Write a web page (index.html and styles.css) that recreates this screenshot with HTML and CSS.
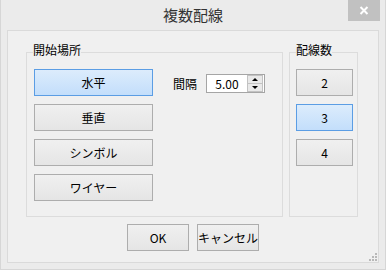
FILE: index.html
```html
<!DOCTYPE html>
<html lang="ja">
<head>
    <meta charset="UTF-8">
    <title>複数配線</title>
    <link rel="stylesheet" href="styles.css">
</head>
<body>

    <div class="window">
        <div class="titlebar">
            <span class="title">複数配線</span>
            <button class="close" type="button" aria-label="閉じる">
                <svg width="10" height="9" viewBox="0 0 10 9"><path d="M1.5 1 L8.5 8 M8.5 1 L1.5 8" stroke="#fff" stroke-width="2"/></svg>
            </button>
        </div>

        <div class="panel">
            <div class="groups">
                <fieldset class="group group-start">
                    <legend>開始場所</legend>
                    <div class="btn-col">
                        <button class="btn wide on" type="button">水平</button>
                        <button class="btn wide" type="button">垂直</button>
                        <button class="btn wide" type="button">シンボル</button>
                        <button class="btn wide" type="button">ワイヤー</button>
                    </div>
                    <div class="spacing">
                        <label for="pitch">間隔</label>
                        <div class="spinbox">
                            <input type="text" id="pitch" value="5.00">
                            <svg class="spin" width="16" height="17" viewBox="0 0 16 17">
                                <rect x="0.5" y="0.5" width="15" height="16" fill="#e9e9e9" stroke="#c2c2c2"/>
                                <path d="M1 8.5 H15" stroke="#c2c2c2"/>
                                <path d="M5 6 L8 3 L11 6 Z" fill="#000"/>
                                <path d="M5 11 L11 11 L8 14 Z" fill="#000"/>
                            </svg>
                        </div>
                    </div>
                </fieldset>

                <fieldset class="group group-count">
                    <legend>配線数</legend>
                    <div class="btn-col">
                        <button class="btn narrow" type="button">2</button>
                        <button class="btn narrow on" type="button">3</button>
                        <button class="btn narrow" type="button">4</button>
                    </div>
                </fieldset>
            </div>

            <div class="actions">
                <button class="btn action" type="button">OK</button>
                <button class="btn action" type="button">キャンセル</button>
            </div>

            <!-- resize grip -->
            <svg class="grip" width="8" height="8" viewBox="0 0 8 8" fill="#b8b8b8">
                <rect x="6" y="0" width="2" height="2"/>
                <rect x="3" y="3" width="2" height="2"/><rect x="6" y="3" width="2" height="2"/>
                <rect x="0" y="6" width="2" height="2"/><rect x="3" y="6" width="2" height="2"/><rect x="6" y="6" width="2" height="2"/>
            </svg>
        </div>
    </div>

</body>
</html>
```

FILE: styles.css
```css
body { margin: 0; background-color: #ebebeb; font-family: "Noto Sans CJK JP", "Liberation Sans", sans-serif; font-size: 12px; color: #000; }
.window { width: 386px; height: 270px; box-sizing: border-box; background-color: #ebebeb; border: 1px solid #d6d6d6; border-top: none; }
.titlebar { display: grid; grid-template-columns: 1fr auto 1fr; height: 30px; }
.title { grid-column: 2; font-size: 15px; line-height: 30px; color: #333; }
.close { grid-column: 3; justify-self: end; align-self: start; width: 32px; height: 21px; margin-right: 5px; padding: 0; border: none; background-color: #c1c1c1; display: flex; align-items: center; justify-content: center; }
.panel { position: relative; margin: 0 6px; height: 233px; box-sizing: border-box; border: 1px solid #dadada; background-color: #f0f0f0; }
.groups { display: flex; gap: 6px; margin: 11px 0 0 18px; }
.group { margin: 0; box-sizing: border-box; border: 1px solid #dcdcdc; padding-top: 7px; padding-bottom: 15px; }
.group legend { padding: 0 0 4px 0; line-height: 16px; }
.group-start { width: 257px; display: flex; padding-left: 7px; padding-right: 0; }
.group-start legend { margin-left: -1px; }
.group-count { width: 69px; padding-left: 6px; padding-right: 0; }
.btn-col { display: flex; flex-direction: column; gap: 8px; }
.btn { height: 27px; padding: 0; border: 1px solid #adadad; background: linear-gradient(#f0f0f0, #e5e5e5); font-family: inherit; font-size: 12px; color: #000; }
.btn.on { border-color: #5b9de4; background: linear-gradient(#dcecfc, #c3defb); }
.btn.wide { width: 119px; }
.btn.narrow { width: 57px; }
.spacing { display: flex; align-items: center; gap: 9px; margin: 5px 0 0 20px; height: 19px; }
.spacing label { line-height: 16px; }
.spinbox { display: flex; align-items: center; width: 59px; height: 19px; box-sizing: border-box; border: 1px solid #a5a5a5; background-color: #fff; }
.spinbox input { width: 40px; border: none; padding: 0; margin: 0; font-family: inherit; font-size: 12px; text-align: center; background: transparent; outline: none; }
.spin { display: block; }
.actions { display: flex; justify-content: center; gap: 8px; margin-top: 7px; }
.btn.action { width: 62px; }
.grip { position: absolute; right: 1px; bottom: 1px; }
```
